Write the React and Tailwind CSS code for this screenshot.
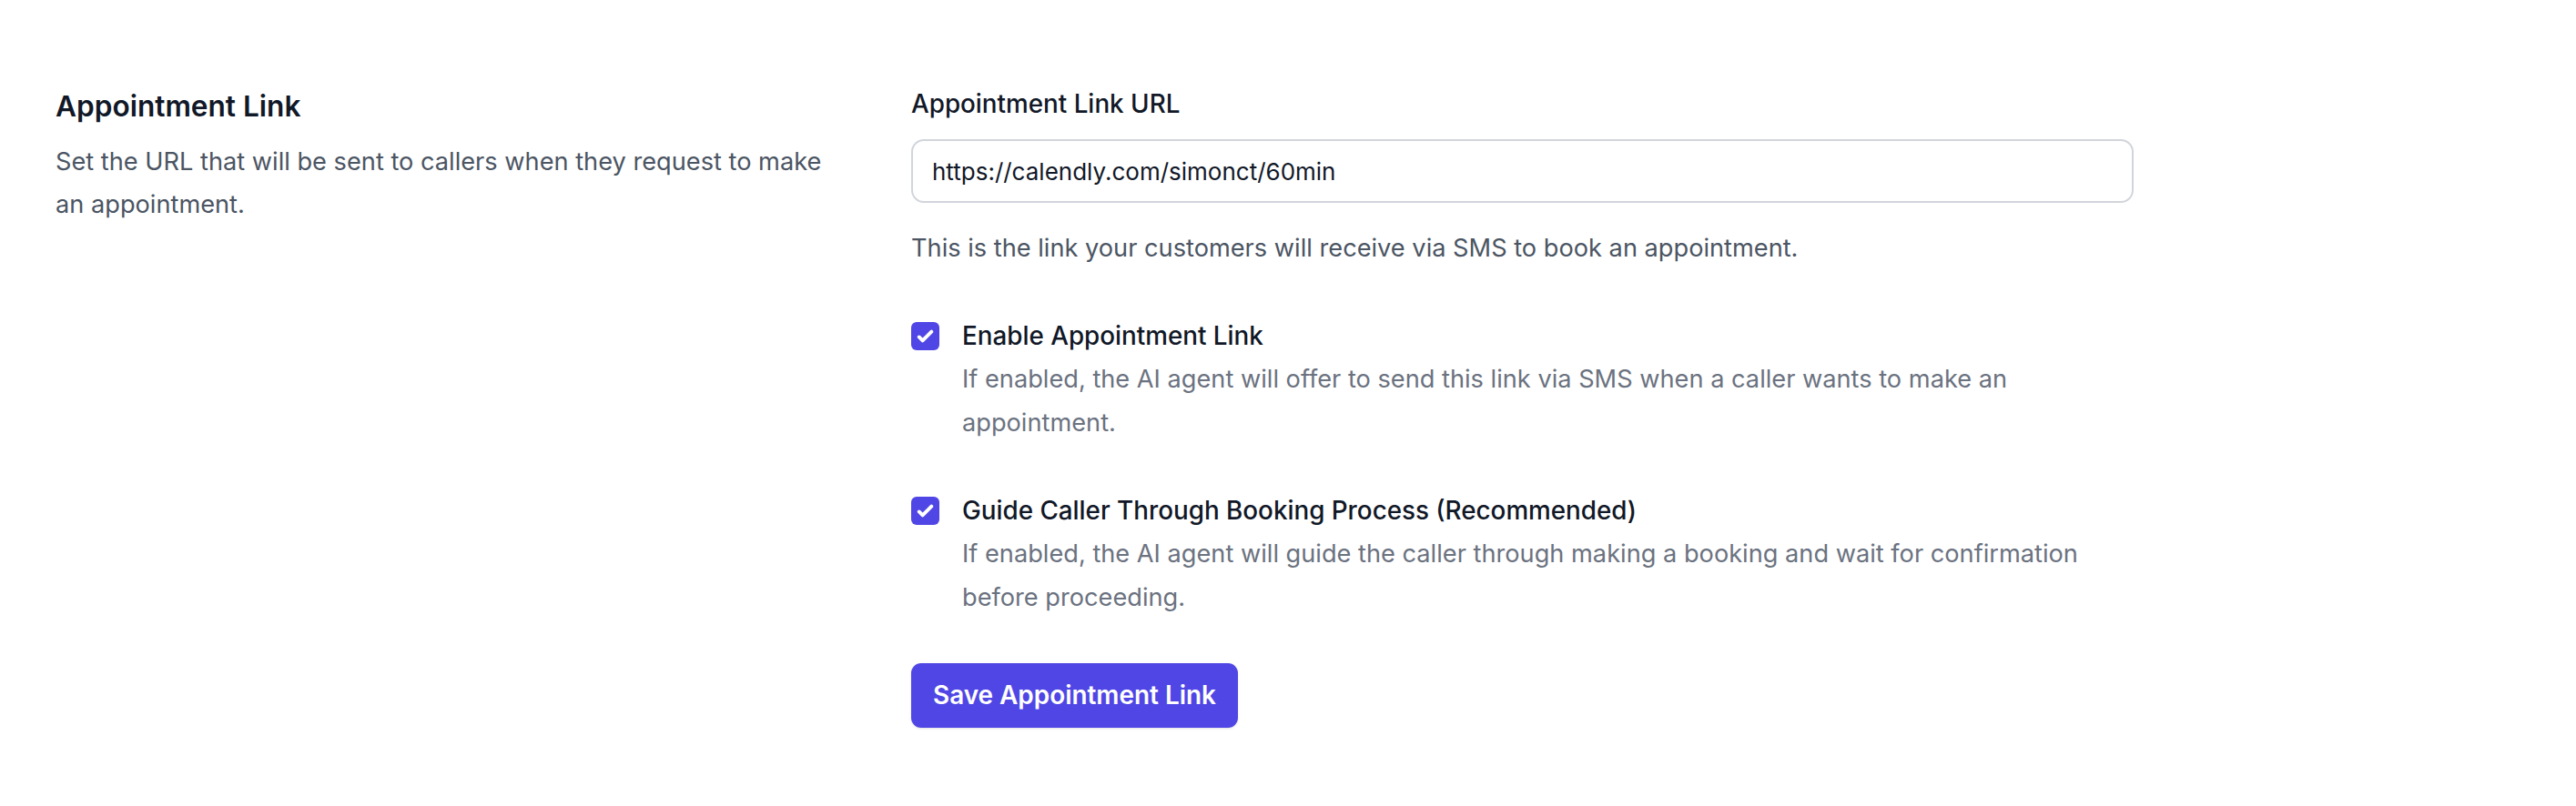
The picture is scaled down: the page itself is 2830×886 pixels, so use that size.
import React from "react";

function CheckBox() {
  return (
    <div className="w-[31px] h-[31px] rounded-[6px] bg-[#4f46e5] flex items-center justify-center shrink-0">
      <svg viewBox="0 0 16 16" className="w-[31px] h-[31px]" fill="#ffffff">
        <path d="M12.207 4.793a1 1 0 010 1.414l-5 5a1 1 0 01-1.414 0l-2-2a1 1 0 011.414-1.414L6.5 9.086l4.293-4.293a1 1 0 011.414 0z" />
      </svg>
    </div>
  );
}

function Option({ label, desc }) {
  return (
    <div className="flex gap-[25px]">
      <div className="h-[48px] flex items-center">
        <CheckBox />
      </div>
      <div className="flex-1">
        <div className="text-[27.8px] leading-[48px] font-medium text-[#111827]">{label}</div>
        <div className="text-[27.2px] leading-[48px] text-[#6b7280]">{desc}</div>
      </div>
    </div>
  );
}

export default function App() {
  return (
    <div className="min-h-screen bg-white font-['Inter',sans-serif]">
      <div className="flex pl-[61px] pt-[90px] gap-[75px]">
        <div className="w-[865px] shrink-0">
          <h2 className="text-[31.6px] leading-[54px] font-semibold text-[#111827]">Appointment Link</h2>
          <p className="mt-[10px] text-[27.2px] leading-[47px] text-[#4b5563]">
            Set the URL that will be sent to callers when they request to make an appointment.
          </p>
        </div>
        <div className="w-[1343px] shrink-0">
          <label className="block text-[27.8px] leading-[48px] font-medium text-[#111827]">Appointment Link URL</label>
          <input
            type="text"
            readOnly
            value="https://calendly.com/simonct/60min"
            className="mt-[15px] block w-full h-[70px] border-2 border-[#d1d5db] rounded-[14px] px-[21px] text-[26px] text-[#111827] outline-none bg-white"
          />
          <p className="mt-[26px] text-[27.2px] leading-[48px] text-[#4b5563]">
            This is the link your customers will receive via SMS to book an appointment.
          </p>
          <div className="mt-[48px] flex flex-col gap-[48px]">
            <Option
              label="Enable Appointment Link"
              desc="If enabled, the AI agent will offer to send this link via SMS when a caller wants to make an appointment."
            />
            <Option
              label="Guide Caller Through Booking Process (Recommended)"
              desc="If enabled, the AI agent will guide the caller through making a booking and wait for confirmation before proceeding."
            />
          </div>
          <button className="mt-[48px] h-[71px] px-[24px] rounded-[11px] bg-[#4f46e5] text-white font-semibold text-[27.9px] shadow-sm">
            Save Appointment Link
          </button>
        </div>
      </div>
    </div>
  );
}
